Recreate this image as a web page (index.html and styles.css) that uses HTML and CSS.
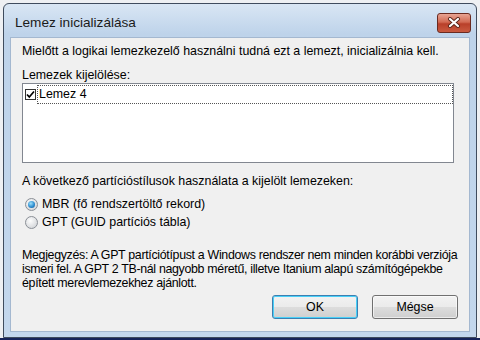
FILE: index.html
```html
<!DOCTYPE html>
<html lang="hu">
<head>
    <meta charset="UTF-8">
    <meta name="viewport" content="width=device-width, initial-scale=1.0">
    <title>Lemez inicializálása</title>
    <link rel="stylesheet" href="styles.css">
</head>
<body>
    <!-- Dialog window -->
    <div class="window">
        <div class="titlebar">
            <span class="title">Lemez inicializálása</span>
            <button class="close-btn" aria-label="Bezárás">
                <svg width="14" height="11" viewBox="0 0 14 11">
                    <path d="M3 2 L11 9 M11 2 L3 9" stroke="#5a2418" stroke-width="4" stroke-linecap="round"/>
                    <path d="M3 2 L11 9 M11 2 L3 9" stroke="#ffffff" stroke-width="2.2" stroke-linecap="round"/>
                </svg>
            </button>
        </div>

        <div class="client">
            <p class="intro">Mielőtt a logikai lemezkezelő használni tudná ezt a lemezt, inicializálnia kell.</p>

            <div class="label">Lemezek kijelölése:</div>
            <div class="disk-list">
                <div class="disk-item">
                    <span class="checkbox">
                        <svg width="9" height="9" viewBox="0 0 9 9">
                            <path d="M1 4.5 L3.3 7 L8 1.5" fill="none" stroke="#000" stroke-width="1.7"/>
                        </svg>
                    </span>
                    <span class="disk-name">Lemez 4</span>
                </div>
            </div>

            <div class="label spaced">A következő partícióstílusok használata a kijelölt lemezeken:</div>
            <div class="radio-group">
                <label class="radio-row"><span class="radio checked"></span>MBR (fő rendszertöltő rekord)</label>
                <label class="radio-row"><span class="radio"></span>GPT (GUID partíciós tábla)</label>
            </div>

            <p class="note">Megjegyzés: A GPT partíciótípust a Windows rendszer nem minden korábbi verziója<br>ismeri fel. A GPT 2 TB-nál nagyobb méretű, illetve Itanium alapú számítógépekbe<br>épített merevlemezekhez ajánlott.</p>

            <div class="buttons">
                <button class="btn default">OK</button>
                <button class="btn">Mégse</button>
            </div>
        </div>
    </div>
    <div class="taskbar"></div>
</body>
</html>
```

FILE: styles.css
```css
/* General */
body {
    margin: 0;
    padding: 3px 0 0 3px;
    width: 480px;
    height: 340px;
    box-sizing: border-box;
    display: flex;
    flex-direction: column;
    background: #eef0f3;
    font-family: "Liberation Sans", Arial, sans-serif;
    font-size: 12.4px;
    color: #000;
    overflow: hidden;
}

/* Window frame */
.window {
    width: 474px;
    height: 335px;
    box-sizing: border-box;
    border: 1px solid #3f4c5e;
    border-radius: 6px 6px 0 0;
    background: linear-gradient(#d9e6f4, #bed3ea 30px, #c3d7ed);
    padding: 0 6px 5px;
    display: flex;
    flex-direction: column;
}

.titlebar {
    height: 33px;
    display: flex;
    align-items: center;
    justify-content: space-between;
    padding: 4px 0 0 5px;
    box-sizing: border-box;
}

.title {
    font-size: 13.6px;
    color: #1b1b1b;
}

.close-btn {
    width: 34px;
    height: 20px;
    margin-right: -1px;
    padding: 0;
    border: 1px solid #6a2a20;
    border-radius: 3px;
    background: linear-gradient(#e8a493, #d26a53 45%, #b9402a 55%, #c95a40);
    display: flex;
    align-items: center;
    justify-content: center;
}

/* Client area */
.client {
    flex: 1;
    background: #f0f0f0;
    border: 1px solid #a4b8d0;
    padding: 6px 11px 0;
}

.intro,
.note {
    margin: 0;
    line-height: 15px;
}

.label {
    margin-top: 9px;
    line-height: 15px;
}

.label.spaced {
    margin-top: 11px;
}

/* Disk list */
.disk-list {
    width: 432px;
    height: 80px;
    box-sizing: border-box;
    border: 1px solid #828790;
    background: #fff;
    padding: 1px 0 0 2px;
}

.disk-item {
    display: flex;
    align-items: center;
    height: 19px;
}

.checkbox {
    width: 11px;
    height: 11px;
    box-sizing: border-box;
    border: 1px solid #333;
    background: #fff;
    display: flex;
    align-items: center;
    justify-content: center;
}

.disk-name {
    flex: 1;
    height: 19px;
    line-height: 17px;
    box-sizing: border-box;
    border: 1px dotted #555;
    margin-left: 1px;
    padding-left: 1px;
}

/* Radios */
.radio-group {
    margin-top: 6px;
    padding-left: 3px;
}

.radio-row {
    display: flex;
    align-items: center;
    gap: 4px;
    height: 18px;
}

.radio {
    width: 13px;
    height: 13px;
    box-sizing: border-box;
    border-radius: 50%;
    border: 1px solid #8a8f96;
    background: radial-gradient(circle at 40% 35%, #fdfdfd, #d9dbde 70%, #cfd2d6);
    position: relative;
}

.radio.checked::after {
    content: "";
    position: absolute;
    left: 2px;
    top: 2px;
    width: 7px;
    height: 7px;
    border-radius: 50%;
    background: radial-gradient(circle at 40% 35%, #9ee0fb, #2f8fd0 55%, #0d4f8e);
}

/* Note */
.note {
    margin-top: 17px;
    line-height: 14px;
    white-space: nowrap;
    letter-spacing: -0.32px;
}

/* Buttons */
.buttons {
    display: flex;
    justify-content: flex-end;
    gap: 14px;
    margin-top: 5px;
}

.btn {
    width: 86px;
    height: 24px;
    font-family: inherit;
    font-size: 12.4px;
    color: #000;
    border: 1px solid #707070;
    border-radius: 3px;
    background: linear-gradient(#f2f2f2, #ebebeb 50%, #dddddd 50%, #cfcfcf);
    box-shadow: inset 0 0 0 1px rgba(255, 255, 255, 0.6);
}

.btn.default {
    border-color: #3c7fb1;
    box-shadow: inset 0 0 0 1px #48d0f8;
}

.taskbar {
    flex: 1;
    margin-left: -3px;
    background: #16245a;
}
```
